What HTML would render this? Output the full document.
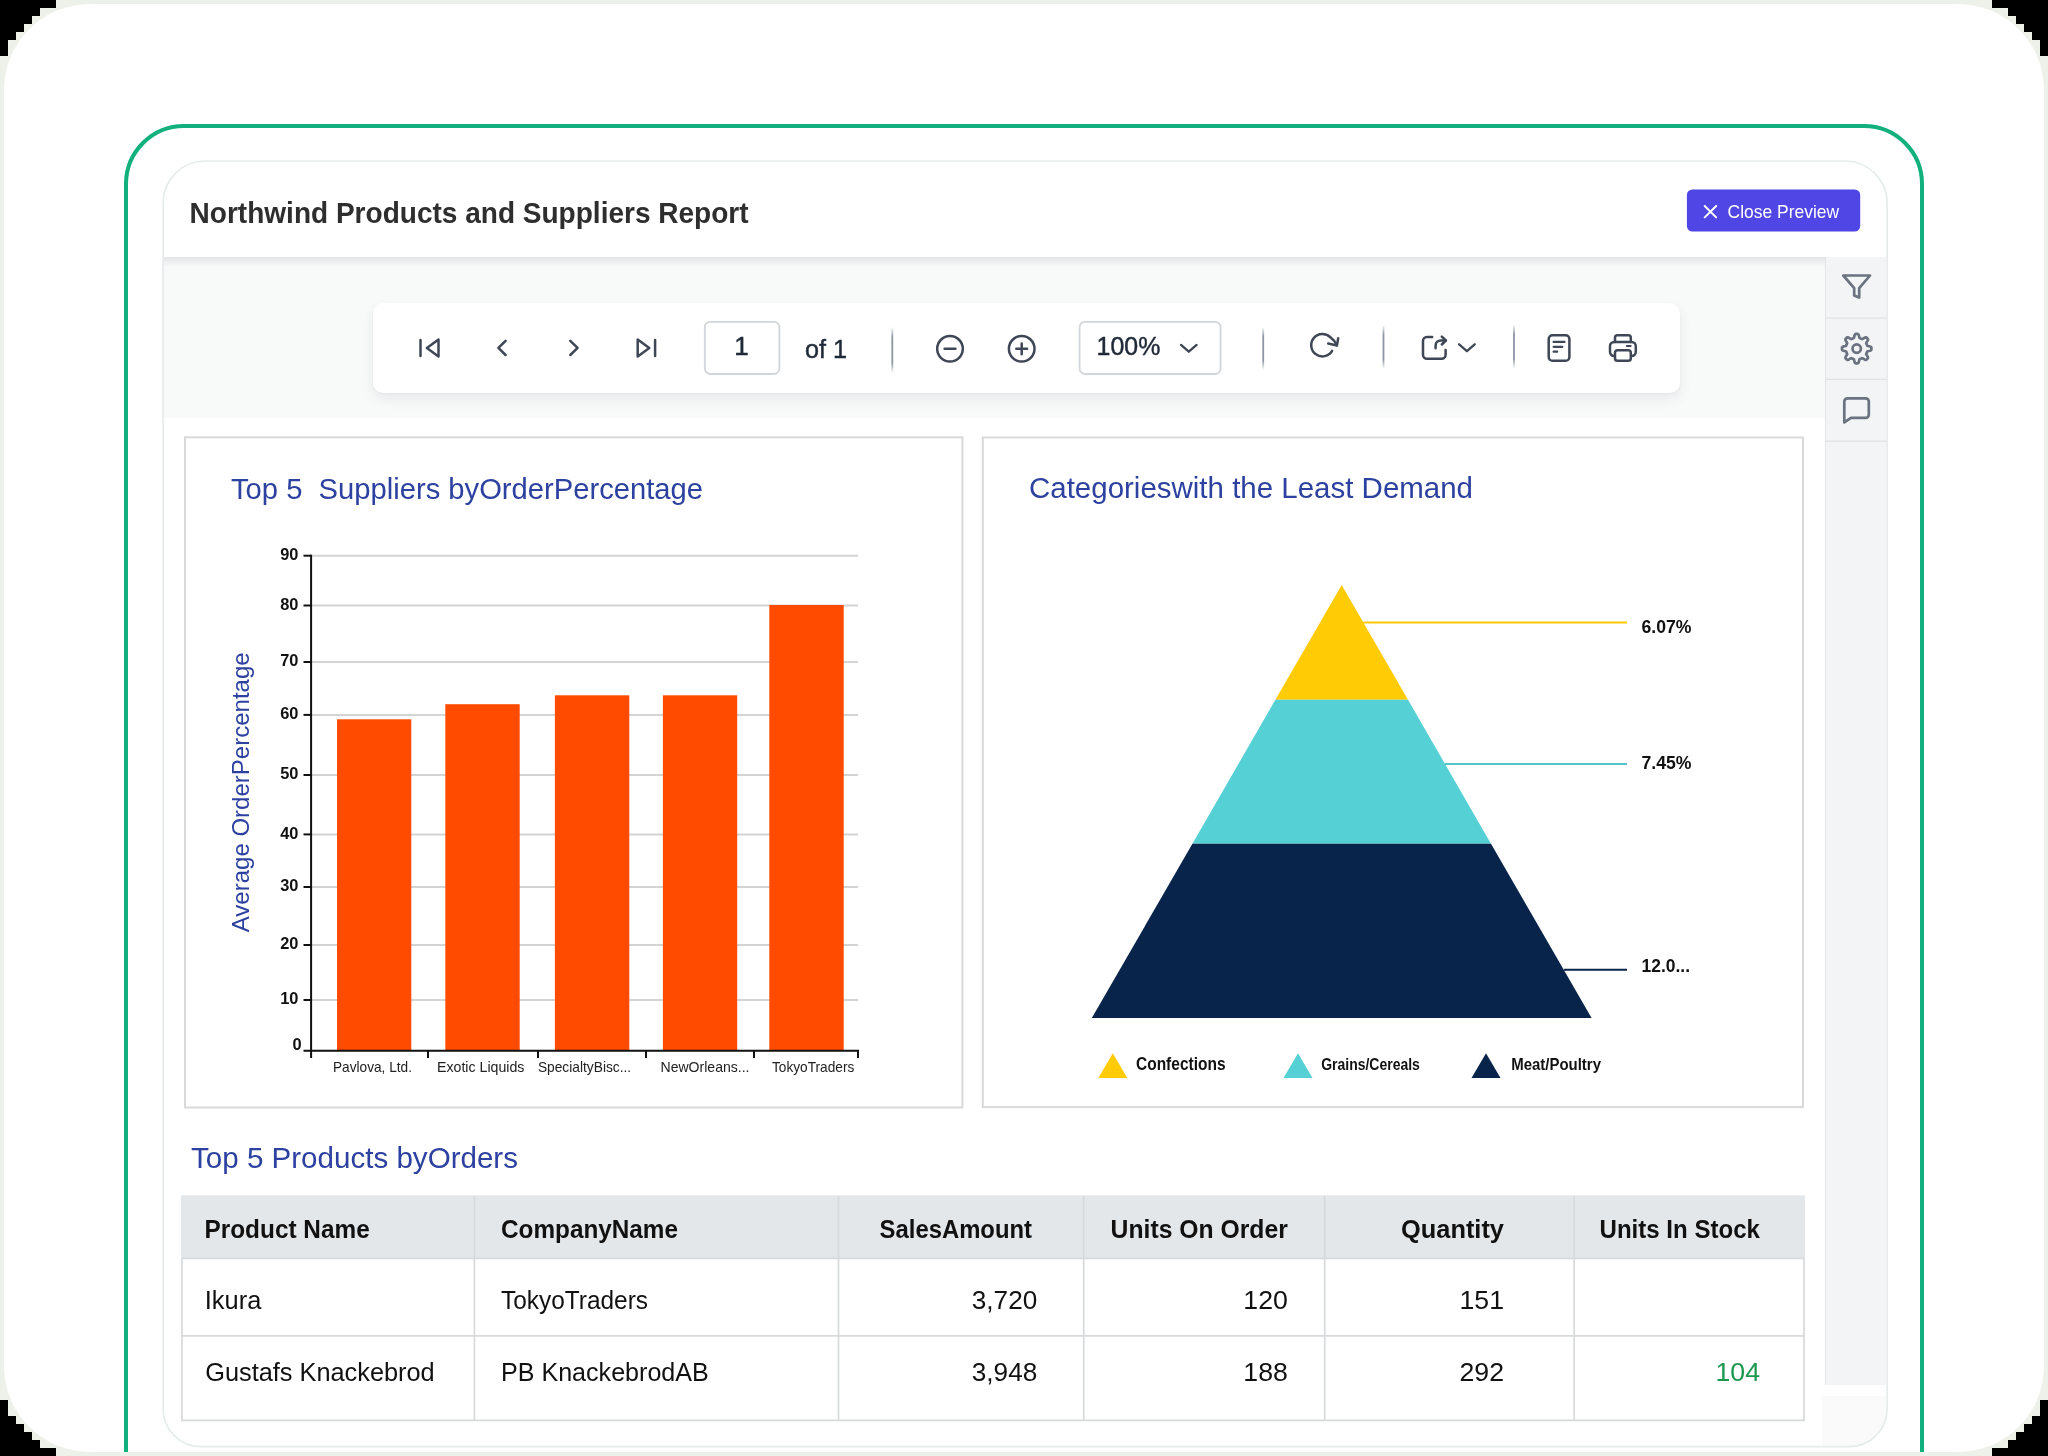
<!DOCTYPE html>
<html>
<head>
<meta charset="utf-8">
<title>Northwind Products and Suppliers Report</title>
<style>
*{box-sizing:border-box;margin:0;padding:0}
html,body{width:2048px;height:1456px;overflow:hidden}
body{background:#eef0ea;font-family:"Liberation Sans",sans-serif;position:relative;color:#1f2937}
.abs{position:absolute}
#corners{left:0;top:0;width:2048px;height:1456px;z-index:50;pointer-events:none}
#page{left:4px;top:4px;width:2040px;height:1448px;background:#fff;border-radius:86px;overflow:hidden}
#green{left:120px;top:120px;width:1800px;height:1500px;border:4px solid #11b07c;border-radius:60px}
#card{left:160px;top:157px;width:1722px;height:1285px;border-radius:41px 41px 37px 37px;overflow:hidden;background:#fff}
#hdrshadow{left:0;top:96px;width:1662px;height:10px;background:linear-gradient(#e2e4e6,#f8f9f9)}
#toolzone{left:0;top:96px;width:1662px;height:161px;background:#f8f9f9}
#side{left:1661px;top:96px;width:64px;height:1128px;background:#f2f4f6;border-left:1px solid #e2e6ea}
#pill{left:209px;top:142px;width:1307px;height:90px;background:#fff;border-radius:10px;box-shadow:0 6px 14px rgba(30,40,60,.07),0 1px 3px rgba(30,40,60,.04)}
#report{left:0;top:257px;width:1661px;height:1040px;background:#fff}
</style>
</head>
<body>
<div id="page" class="abs">
  <div id="green" class="abs"></div>
  <div id="card" class="abs">
    <div id="toolzone" class="abs"></div>
    <div id="hdrshadow" class="abs"></div>
    <div id="side" class="abs"></div>
    <div id="pill" class="abs"></div>
    <div class="abs" style="left:1658px;top:1235px;width:70px;height:60px;background:#fafafa;z-index:3"></div>
    <div id="report" class="abs"></div>
  </div>
</div>

<svg id="ov" class="abs" viewBox="0 0 2048 1456" width="2048" height="1456" style="left:0;top:0;z-index:20;will-change:transform" font-family="Liberation Sans, sans-serif">
<defs>
<linearGradient id="sepg" x1="0" y1="0" x2="0" y2="1">
<stop offset="0" stop-color="#8d94a3" stop-opacity="0"/><stop offset=".22" stop-color="#8d94a3" stop-opacity="1"/><stop offset=".78" stop-color="#8d94a3" stop-opacity="1"/><stop offset="1" stop-color="#8d94a3" stop-opacity="0"/>
</linearGradient>
</defs>
<path d="M205.1 161H1845.1a42 42 0 0 1 42 42V1408.7a38 38 0 0 1-38 38H201.1a38 38 0 0 1-38-38V203a42 42 0 0 1 42-42Z" fill="none" stroke="#e6ebeb" stroke-width="1.7"/>
<!-- TOOLBAR -->
<g fill="#fff" stroke="#d2d5da" stroke-width="1.8">
  <rect x="704.8" y="321.8" width="74.6" height="52.2" rx="5.5"/>
  <rect x="1079.6" y="321.8" width="141" height="52.2" rx="5.5"/>
</g>
<g id="tb" fill="none" stroke="#3f4756" stroke-width="2.5" stroke-linecap="round" stroke-linejoin="round">
  <path d="M420.5 339.9V356.1"/><path d="M438.5 339.6L426.9 348L438.5 356.4Z"/>
  <path d="M505.6 340.8L498.4 347.9L505.6 355"/>
  <path d="M570.3 340.8L577.6 347.9L570.3 355"/>
  <path d="M637.7 339.6L649.3 348L637.7 356.4Z"/><path d="M655.1 339.9V356.1"/>
  <circle cx="950" cy="348.8" r="12.8"/><path d="M944.6 348.8H955.4"/>
  <circle cx="1021.7" cy="348.8" r="12.8"/><path d="M1016.3 348.8H1027.1M1021.7 343.4V354.2"/>
  <path d="M1181 344.9L1188.8 351.7L1196.6 344.9" stroke-width="2.3"/>
  <!-- refresh -->
  <path d="M1332.1 350.8A11.2 11.2 0 1 1 1330.4 337.3Q1335 340.8 1336.8 345.3"/><path d="M1338.2 338.2L1336.9 345.5L1328.2 343.5"/>
  <!-- export -->
  <path d="M1432.2 336.9H1427a4 4 0 0 0-4 4V354.8a4 4 0 0 0 4 4H1441.6a4 4 0 0 0 4-4V350"/>
  <path d="M1435.6 348.2V345.5a5 5 0 0 1 5-5H1445.6"/><path d="M1441.8 336.6L1445.9 340.5L1441.8 344.5"/>
  <path d="M1459.1 344.3L1466.9 351.2L1474.7 344.3" stroke-width="2.3"/>
  <!-- doc -->
  <rect x="1548.7" y="335.3" width="20.7" height="25.5" rx="3.8"/>
  <path d="M1553.6 341.9H1564.5M1553.6 346.8H1562.3M1553.6 351.7H1557.2" stroke-width="2.2"/>
  <!-- print -->
  <rect x="1610" y="342" width="25.8" height="14" rx="4.2"/>
  <path d="M1615 342V337.4a2.2 2.2 0 0 1 2.2-2.2h11.4a2.2 2.2 0 0 1 2.2 2.2V342"/>
  <rect x="1615" y="350.2" width="15.8" height="10.6" rx="2.6" fill="#fff"/>
  <path d="M1626.8 346.1H1630.6" stroke-width="2"/>
</g>
<g fill="url(#sepg)">
  <rect x="891.4" y="327" width="1.8" height="46"/>
  <rect x="1262.3" y="327" width="1.8" height="43"/>
  <rect x="1382.6" y="325" width="1.8" height="44"/>
  <rect x="1513.1" y="324.5" width="1.8" height="44"/>
</g>
<g fill="#1f2937" stroke="#1f2937" stroke-width="0.45">
  <text x="741.4" y="355" font-size="26" text-anchor="middle">1</text>
  <text x="805" y="357.6" font-size="26.5" textLength="42" lengthAdjust="spacingAndGlyphs">of 1</text>
  <text x="1096.6" y="354.6" font-size="25.8" textLength="63.7" lengthAdjust="spacingAndGlyphs">100%</text>
</g>
<!-- CHART 1 -->
<g fill="#fff" stroke="#d9d9d9" stroke-width="2"><rect x="185" y="437.3" width="777.4" height="670.2"/><rect x="982.8" y="437.5" width="820.2" height="669.6"/></g>
<g fill="#2c41a0"><text x="231" y="499" font-size="30" textLength="472" lengthAdjust="spacingAndGlyphs" xml:space="preserve">Top 5  Suppliers byOrderPercentage</text>
<text x="1029" y="497.7" font-size="30" textLength="444" lengthAdjust="spacingAndGlyphs">Categorieswith the Least Demand</text>
<text x="191" y="1168.3" font-size="30" textLength="327" lengthAdjust="spacingAndGlyphs">Top 5 Products byOrders</text>
<text transform="translate(248.6,932.3) rotate(-90)" font-size="23.8" textLength="280" lengthAdjust="spacingAndGlyphs">Average OrderPercentage</text></g>
<g stroke="#d4d4d4" stroke-width="2"><path d="M311 555.7H858"/><path d="M311 605.5H858"/><path d="M311 662H858"/><path d="M311 714.9H858"/><path d="M311 775H858"/><path d="M311 834.4H858"/><path d="M311 887H858"/><path d="M311 945H858"/><path d="M311 1000H858"/></g>
<g fill="#ff4b00"><rect x="337" y="719.3" width="74.3" height="330.7"/><rect x="445.3" y="704.2" width="74.4" height="345.8"/><rect x="554.9" y="695.3" width="74.4" height="354.7"/><rect x="662.9" y="695.3" width="74.3" height="354.7"/><rect x="769.3" y="605" width="74.4" height="445"/></g>
<g stroke="#111" stroke-width="2" fill="none"><path d="M303.5 555.7H311"/><path d="M303.5 605.5H311"/><path d="M303.5 662H311"/><path d="M303.5 714.9H311"/><path d="M303.5 775H311"/><path d="M303.5 834.4H311"/><path d="M303.5 887H311"/><path d="M303.5 945H311"/><path d="M303.5 1000H311"/><path d="M311.1 554.7V1058M303.5 1050.7H859"/><path d="M428 1050V1058"/><path d="M538 1050V1058"/><path d="M646 1050V1058"/><path d="M754 1050V1058"/><path d="M858 1050V1058"/></g>
<g fill="#111" font-weight="bold" font-size="16.4" text-anchor="end"><text x="298.4" y="560.1">90</text><text x="298.4" y="609.9">80</text><text x="298.4" y="666.4">70</text><text x="298.4" y="719.3">60</text><text x="298.4" y="779.4">50</text><text x="298.4" y="838.8">40</text><text x="298.4" y="891.4">30</text><text x="298.4" y="949.4">20</text><text x="298.4" y="1004.4">10</text><text x="301.6" y="1050.2">0</text></g>
<g fill="#222" font-size="14.5"><text x="333" y="1071.7" textLength="79" lengthAdjust="spacingAndGlyphs">Pavlova, Ltd.</text><text x="437" y="1071.7" textLength="87.4" lengthAdjust="spacingAndGlyphs">Exotic Liquids</text><text x="537.9" y="1071.7" textLength="93.3" lengthAdjust="spacingAndGlyphs">SpecialtyBisc...</text><text x="660.5" y="1071.7" textLength="89" lengthAdjust="spacingAndGlyphs">NewOrleans...</text><text x="772" y="1071.7" textLength="82.3" lengthAdjust="spacingAndGlyphs">TokyoTraders</text></g>
<!-- CHART 2 -->
<path d="M1341.7 585L1275.4 699.7H1408Z" fill="#ffcb05"/><path d="M1275.4 699.7H1408L1491 843.8H1192.4Z" fill="#55d0d4"/><path d="M1192.4 843.8H1491L1591.6 1018H1091.8Z" fill="#08244a"/>
<g stroke-width="2" fill="none"><path d="M1362.7 622.6H1627" stroke="#ffcb05"/><path d="M1444.6 763.9H1627" stroke="#55c4c8"/><path d="M1564 969.8H1627" stroke="#08244a"/></g>
<g fill="#111" font-weight="bold" font-size="18"><text x="1641.5" y="632.9" textLength="50" lengthAdjust="spacingAndGlyphs">6.07%</text><text x="1641.5" y="769.3" textLength="50" lengthAdjust="spacingAndGlyphs">7.45%</text><text x="1641.5" y="972" textLength="48.5" lengthAdjust="spacingAndGlyphs">12.0...</text></g>
<path d="M1112.8 1053.2L1127.3 1078H1098.3Z" fill="#ffcb05"/><path d="M1298 1053.2L1312.5 1078H1283.5Z" fill="#55d0d4"/><path d="M1486 1053.2L1500.5 1078H1471.5Z" fill="#08244a"/>
<g fill="#111" font-weight="bold"><text x="1136" y="1070.4" font-size="17.9" textLength="89.5" lengthAdjust="spacingAndGlyphs">Confections</text><text x="1321.2" y="1069.9" font-size="16.3" textLength="98.7" lengthAdjust="spacingAndGlyphs">Grains/Cereals</text><text x="1511.2" y="1069.9" font-size="16.3" textLength="89.8" lengthAdjust="spacingAndGlyphs">Meat/Poultry</text></g>
<!-- TABLE -->
<rect x="181" y="1195.3" width="1624" height="63" fill="#e4e7ea"/>
<g stroke="#d8d9da" stroke-width="1.7" fill="none"><path d="M182 1258.4H1804M182 1335.8H1804M181 1420.4H1805M182 1258V1421M1804 1258V1421"/><path d="M474.4 1196V1421"/><path d="M838.5 1196V1421"/><path d="M1083.7 1196V1421"/><path d="M1324.7 1196V1421"/><path d="M1574.2 1196V1421"/></g>
<g fill="#111" font-weight="bold" font-size="25.8"><text x="204.5" y="1238.3" textLength="165.2" lengthAdjust="spacingAndGlyphs">Product Name</text><text x="501" y="1238.3" textLength="177" lengthAdjust="spacingAndGlyphs">CompanyName</text><text x="879.6" y="1238.3" textLength="152.4" lengthAdjust="spacingAndGlyphs">SalesAmount</text><text x="1110.6" y="1238.3" textLength="177.2" lengthAdjust="spacingAndGlyphs">Units On Order</text><text x="1401" y="1238.3" textLength="103" lengthAdjust="spacingAndGlyphs">Quantity</text><text x="1599.5" y="1238.3" textLength="160.5" lengthAdjust="spacingAndGlyphs">Units In Stock</text></g>
<g fill="#111" font-size="26.5"><text x="204.8" y="1308.6" textLength="56.5" lengthAdjust="spacingAndGlyphs">Ikura</text><text x="501" y="1308.6" textLength="147" lengthAdjust="spacingAndGlyphs">TokyoTraders</text><text x="971.8" y="1308.6" textLength="65.5" lengthAdjust="spacingAndGlyphs">3,720</text><text x="1243.3" y="1308.6" textLength="44.5" lengthAdjust="spacingAndGlyphs">120</text><text x="1459.5" y="1308.6" textLength="44.5" lengthAdjust="spacingAndGlyphs">151</text><text x="205.2" y="1380.6" textLength="229.5" lengthAdjust="spacingAndGlyphs">Gustafs Knackebrod</text><text x="501" y="1380.6" textLength="207.8" lengthAdjust="spacingAndGlyphs">PB KnackebrodAB</text><text x="971.8" y="1380.6" textLength="65.5" lengthAdjust="spacingAndGlyphs">3,948</text><text x="1243.3" y="1380.6" textLength="44.5" lengthAdjust="spacingAndGlyphs">188</text><text x="1459.5" y="1380.6" textLength="44.5" lengthAdjust="spacingAndGlyphs">292</text></g>
<text x="1715.5" y="1380.6" font-size="26.5" fill="#1a9850" textLength="44.5" lengthAdjust="spacingAndGlyphs">104</text>
<text x="189.6" y="222.5" font-size="29.8" font-weight="bold" fill="#2e2e2e" textLength="559" lengthAdjust="spacingAndGlyphs">Northwind Products and Suppliers Report</text>
<!-- CLOSE BUTTON -->
<rect x="1686.9" y="189.5" width="173.3" height="42.1" rx="5.5" fill="#4f46e5"/>
<path d="M1704.7 206L1716.2 217.4M1716.2 206L1704.7 217.4" stroke="#fff" stroke-width="2" stroke-linecap="round" fill="none"/>
<text x="1727.6" y="217.8" font-size="18.2" fill="#fff" textLength="111.5" lengthAdjust="spacingAndGlyphs">Close Preview</text>
<!-- SIDEBAR ICONS -->
<path d="M1826 318.1H1887M1826 379.4H1887M1826 441.1H1887" stroke="#dfe3e7" stroke-width="1.4" fill="none"/>
<g fill="none" stroke="#6b7280" stroke-width="2.7" stroke-linecap="round" stroke-linejoin="round">
  <path d="M1843.3 275.5H1870L1859.2 288.2V297.6L1854.2 295.4V288.2Z"/>
  <path d="M1856.7 333.9 L1857.2 333.9 L1857.7 333.9 L1858.1 334.1 L1858.5 334.6 L1858.9 335.5 L1859.1 336.5 L1859.3 337.4 L1859.6 338.0 L1859.9 338.2 L1860.2 338.3 L1860.5 338.4 L1860.9 338.5 L1861.2 338.7 L1861.5 338.8 L1861.8 339.0 L1862.2 339.1 L1862.8 338.8 L1863.6 338.3 L1864.4 337.8 L1865.3 337.4 L1866.0 337.3 L1866.4 337.5 L1866.7 337.9 L1867.1 338.2 L1867.4 338.6 L1867.8 338.9 L1868.0 339.3 L1867.9 340.0 L1867.5 340.9 L1867.0 341.7 L1866.5 342.5 L1866.2 343.1 L1866.3 343.5 L1866.5 343.8 L1866.6 344.1 L1866.8 344.4 L1866.9 344.8 L1867.0 345.1 L1867.1 345.4 L1867.3 345.7 L1867.9 346.0 L1868.8 346.2 L1869.8 346.4 L1870.7 346.8 L1871.2 347.2 L1871.4 347.6 L1871.4 348.1 L1871.4 348.6 L1871.4 349.1 L1871.4 349.6 L1871.2 350.0 L1870.7 350.4 L1869.8 350.8 L1868.8 351.0 L1867.9 351.2 L1867.3 351.5 L1867.1 351.8 L1867.0 352.1 L1866.9 352.4 L1866.8 352.8 L1866.6 353.1 L1866.5 353.4 L1866.3 353.7 L1866.2 354.1 L1866.5 354.7 L1867.0 355.5 L1867.5 356.3 L1867.9 357.2 L1868.0 357.9 L1867.8 358.3 L1867.4 358.6 L1867.1 359.0 L1866.7 359.3 L1866.4 359.7 L1866.0 359.9 L1865.3 359.8 L1864.4 359.4 L1863.6 358.9 L1862.8 358.4 L1862.2 358.1 L1861.8 358.2 L1861.5 358.4 L1861.2 358.5 L1860.9 358.7 L1860.5 358.8 L1860.2 358.9 L1859.9 359.0 L1859.6 359.2 L1859.3 359.8 L1859.1 360.7 L1858.9 361.7 L1858.5 362.6 L1858.1 363.1 L1857.7 363.3 L1857.2 363.3 L1856.7 363.3 L1856.2 363.3 L1855.7 363.3 L1855.3 363.1 L1854.9 362.6 L1854.5 361.7 L1854.3 360.7 L1854.1 359.8 L1853.8 359.2 L1853.5 359.0 L1853.2 358.9 L1852.9 358.8 L1852.5 358.7 L1852.2 358.5 L1851.9 358.4 L1851.6 358.2 L1851.2 358.1 L1850.6 358.4 L1849.8 358.9 L1849.0 359.4 L1848.1 359.8 L1847.4 359.9 L1847.0 359.7 L1846.7 359.3 L1846.3 359.0 L1846.0 358.6 L1845.6 358.3 L1845.4 357.9 L1845.5 357.2 L1845.9 356.3 L1846.4 355.5 L1846.9 354.7 L1847.2 354.1 L1847.1 353.7 L1846.9 353.4 L1846.8 353.1 L1846.6 352.8 L1846.5 352.4 L1846.4 352.1 L1846.3 351.8 L1846.1 351.5 L1845.5 351.2 L1844.6 351.0 L1843.6 350.8 L1842.7 350.4 L1842.2 350.0 L1842.0 349.6 L1842.0 349.1 L1842.0 348.6 L1842.0 348.1 L1842.0 347.6 L1842.2 347.2 L1842.7 346.8 L1843.6 346.4 L1844.6 346.2 L1845.5 346.0 L1846.1 345.7 L1846.3 345.4 L1846.4 345.1 L1846.5 344.8 L1846.6 344.4 L1846.8 344.1 L1846.9 343.8 L1847.1 343.5 L1847.2 343.1 L1846.9 342.5 L1846.4 341.7 L1845.9 340.9 L1845.5 340.0 L1845.4 339.3 L1845.6 338.9 L1846.0 338.6 L1846.3 338.2 L1846.7 337.9 L1847.0 337.5 L1847.4 337.3 L1848.1 337.4 L1849.0 337.8 L1849.8 338.3 L1850.6 338.8 L1851.2 339.1 L1851.6 339.0 L1851.9 338.8 L1852.2 338.7 L1852.5 338.5 L1852.9 338.4 L1853.2 338.3 L1853.5 338.2 L1853.8 338.0 L1854.1 337.4 L1854.3 336.5 L1854.5 335.5 L1854.9 334.6 L1855.3 334.1 L1855.7 333.9 L1856.2 333.9Z"/>
  <circle cx="1856.7" cy="348.6" r="4.2"/>
  <path d="M1844.3 422.4V401.5a3.2 3.2 0 0 1 3.2-3.2H1865.6a3.2 3.2 0 0 1 3.2 3.2V414.7a3.2 3.2 0 0 1-3.2 3.2H1851L1844.3 422.4Z"/>
</g>
</svg>
<svg id="corners" class="abs" viewBox="0 0 2048 1456" width="2048" height="1456">
  <g fill="#000">
    <path d="M0 0H56V8H40V16H32V24H24V32H16V40H8V56H0Z"/>
    <path d="M2048 0H1992V8H2008V16H2016V24H2024V32H2032V40H2040V56H2048Z"/>
    <path d="M0 1456H56V1448H40V1440H32V1432H24V1424H16V1416H8V1400H0Z"/>
    <path d="M2048 1456H1992V1448H2008V1440H2016V1432H2024V1424H2032V1416H2040V1400H2048Z"/>
  </g>
</svg>
</body>
</html>
